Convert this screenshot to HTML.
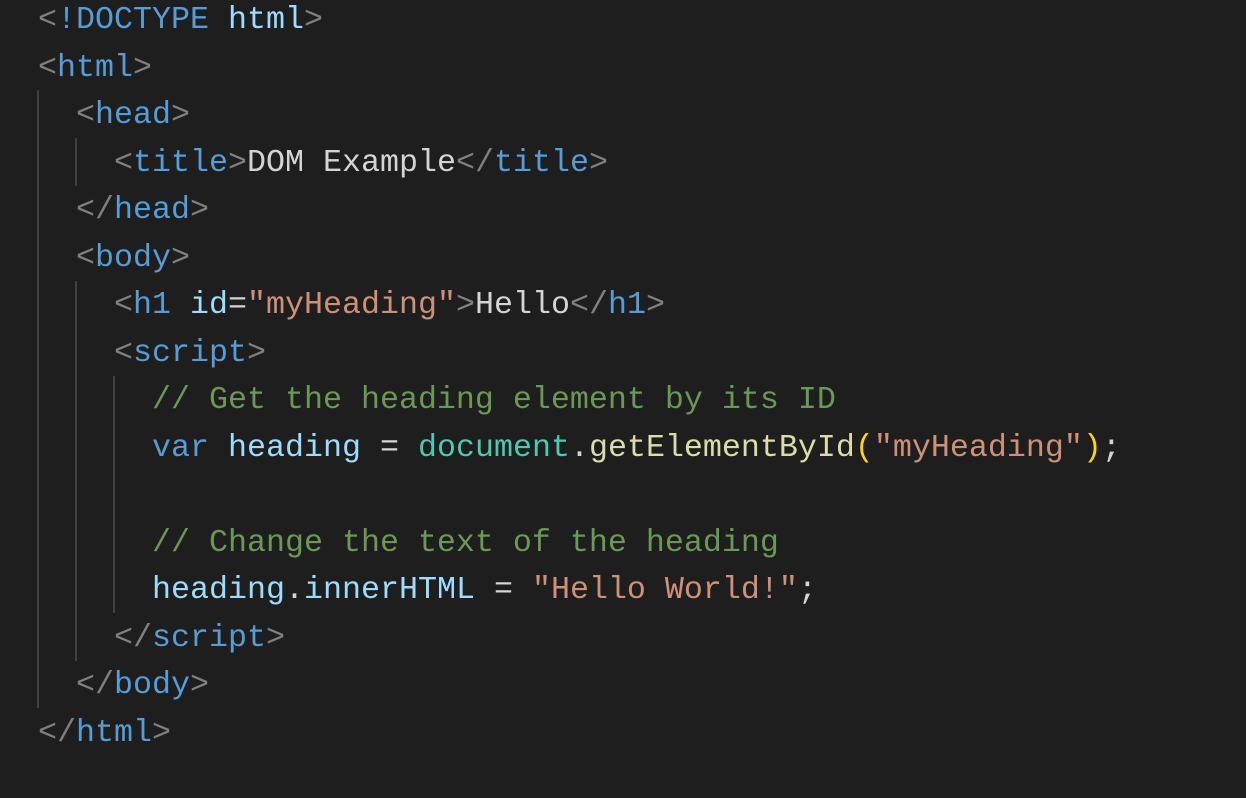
<!DOCTYPE html>
<html><head><style>
body{margin:0;background:#1e1e1e;width:1246px;height:798px;overflow:hidden;position:relative}
pre{margin:0;position:absolute;left:38px;top:-3px;font-family:"Liberation Mono",monospace;font-size:31.67px;line-height:47.53px;color:#d4d4d4}
.g{position:absolute;width:2px;background:#404040}
.b{color:#808080}.t{color:#569cd6}.a{color:#9cdcfe}.s{color:#ce9178}.c{color:#6a9955}.d{color:#4ec9b0}.f{color:#dcdcaa}.p{color:#ffd700}
</style></head><body>
<div class="g" style="left:37px;top:90px;height:618px"></div>
<div class="g" style="left:75px;top:138px;height:48px"></div>
<div class="g" style="left:75px;top:281px;height:380px"></div>
<div class="g" style="left:113px;top:376px;height:237px"></div>
<pre><span class="b">&lt;</span><span class="t">!DOCTYPE</span> <span class="a">html</span><span class="b">&gt;</span>
<span class="b">&lt;</span><span class="t">html</span><span class="b">&gt;</span>
  <span class="b">&lt;</span><span class="t">head</span><span class="b">&gt;</span>
    <span class="b">&lt;</span><span class="t">title</span><span class="b">&gt;</span>DOM Example<span class="b">&lt;/</span><span class="t">title</span><span class="b">&gt;</span>
  <span class="b">&lt;/</span><span class="t">head</span><span class="b">&gt;</span>
  <span class="b">&lt;</span><span class="t">body</span><span class="b">&gt;</span>
    <span class="b">&lt;</span><span class="t">h1</span> <span class="a">id</span>=<span class="s">"myHeading"</span><span class="b">&gt;</span>Hello<span class="b">&lt;/</span><span class="t">h1</span><span class="b">&gt;</span>
    <span class="b">&lt;</span><span class="t">script</span><span class="b">&gt;</span>
      <span class="c">// Get the heading element by its ID</span>
      <span class="t">var</span> <span class="a">heading</span> = <span class="d">document</span>.<span class="f">getElementById</span><span class="p">(</span><span class="s">"myHeading"</span><span class="p">)</span>;

      <span class="c">// Change the text of the heading</span>
      <span class="a">heading</span>.<span class="a">innerHTML</span> = <span class="s">"Hello World!"</span>;
    <span class="b">&lt;/</span><span class="t">script</span><span class="b">&gt;</span>
  <span class="b">&lt;/</span><span class="t">body</span><span class="b">&gt;</span>
<span class="b">&lt;/</span><span class="t">html</span><span class="b">&gt;</span></pre>
</body></html>
